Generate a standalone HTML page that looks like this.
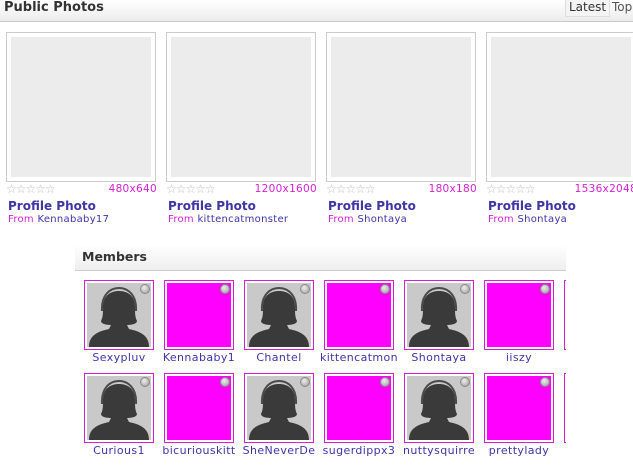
<!DOCTYPE html>
<html><head><style>
*{margin:0;padding:0;box-sizing:border-box}
body{width:633px;height:472px;overflow:hidden;background:#fff;font-family:Verdana,"DejaVu Sans",sans-serif;position:relative}
.hdr{position:absolute;left:0;top:0;width:633px;height:22px;background:linear-gradient(#fff,#ececec);border-bottom:1px solid #c8c8c8}
.hdr b{position:absolute;left:4px;top:0px;font-size:13px;color:#333}
.tab{position:absolute;top:0;font-size:12px;color:#333;height:17px;padding:0 3px;line-height:15px}
.card{position:absolute;top:32px;width:150px}
.card .f{width:150px;height:150px;border:1px solid #ccc;padding:4px;background:#fff}
.card .f div{width:140px;height:140px;background:#ececec}
.stars{position:absolute;top:150px;left:0;font-size:12px;color:#bbb;letter-spacing:-1px}
.sz{position:absolute;top:151px;right:-1px;font-size:10.5px;color:#d41fd4;letter-spacing:0.3px}
.pt{position:absolute;top:167px;left:2px;font-size:12px;font-weight:bold;color:#3d35a8;white-space:nowrap}
.fr{position:absolute;top:182px;left:2px;font-size:10px;color:#3d35a8;white-space:nowrap;letter-spacing:0.3px}
.fr span{color:#d41fd4}
.mh{position:absolute;left:75px;top:245px;width:491px;height:26px;background:linear-gradient(#fff,#eee);border-bottom:1px solid #ccc}
.mh b{position:absolute;left:7px;top:4px;font-size:12.5px;color:#333}
.clip{position:absolute;left:0;top:0;width:566px;height:472px;overflow:hidden}
.m{position:absolute;width:70px;height:70px;border:1px solid #d41fd4;padding:2px;background:#fff}
.m .in{width:64px;height:64px;background:#f0f;position:relative;overflow:hidden}
.m .in.av{background:#c9c9c9}
.dot{position:absolute;right:1px;top:1px;width:10px;height:10px;border-radius:50%;background:radial-gradient(circle at 40% 35%,#eee,#999);border:1px solid #888}
.nm{position:absolute;width:80px;text-align:center;font-size:11px;color:#3d35a8;white-space:nowrap;overflow:hidden;letter-spacing:0.4px}
</style></head><body>
<div class="hdr"><b>Public Photos</b>
<div class="tab" style="left:565px;border:1px solid #ddd;border-top:none;background:#f4f4f4">Latest</div>
<div class="tab" style="left:609px;color:#555">Top</div></div>

<div class="card" style="left:6px"><div class="f"><div></div></div><div class="stars">☆☆☆☆☆</div><div class="sz">480x640</div><div class="pt">Profile Photo</div><div class="fr"><span>From</span> Kennababy17</div></div>
<div class="card" style="left:166px"><div class="f"><div></div></div><div class="stars">☆☆☆☆☆</div><div class="sz">1200x1600</div><div class="pt">Profile Photo</div><div class="fr"><span>From</span> kittencatmonster</div></div>
<div class="card" style="left:326px"><div class="f"><div></div></div><div class="stars">☆☆☆☆☆</div><div class="sz">180x180</div><div class="pt">Profile Photo</div><div class="fr"><span>From</span> Shontaya</div></div>
<div class="card" style="left:486px"><div class="f"><div></div></div><div class="stars">☆☆☆☆☆</div><div class="sz">1536x2048</div><div class="pt">Profile Photo</div><div class="fr"><span>From</span> Shontaya</div></div>

<div class="mh"><b>Members</b></div>
<div class="clip">
<svg width="0" height="0" style="position:absolute"><defs><symbol id="sil" viewBox="0 0 64 64"><path d="M2 64 C2 54 8 49 22 46 L24 42 C17 42 14 40 14 38 C16 34 16 30 16 24 C16 13 23 8 32 8 C41 8 48 13 48 24 C48 30 48 34 50 38 C50 40 47 42 40 42 L42 46 C56 49 62 54 62 64 Z" fill="#3a3a3a"/><path d="M15 28 C14 12 23 5 32 5 C41 5 50 12 49 28" fill="none" stroke="#4a4a4a" stroke-width="2"/></symbol></defs></svg>
<div id="grid"></div>
</div>
<script>
var r1=[["Sexypluv",1],["Kennababy1",0],["Chantel",1],["kittencatmon",0],["Shontaya",1],["iiszy",0],["",0]];
var r2=[["Curious1",1],["bicuriouskitt",0],["SheNeverDe",1],["sugerdippx3",0],["nuttysquirre",1],["prettylady",0],["",0]];
var h="";
[[r1,280],[r2,373]].forEach(function(rw){rw[0].forEach(function(it,i){var x=84+i*80,y=rw[1];
h+='<div class="m" style="left:'+x+'px;top:'+y+'px"><div class="in'+(it[1]?' av':'')+'">'+(it[1]?'<svg width="64" height="64"><use href="#sil"/></svg>':'')+'<div class="dot"></div></div></div>';
h+='<div class="nm" style="left:'+(x-5)+'px;top:'+(y+71)+'px">'+it[0]+'</div>';});});
document.getElementById('grid').innerHTML=h;
</script>
</body></html>
